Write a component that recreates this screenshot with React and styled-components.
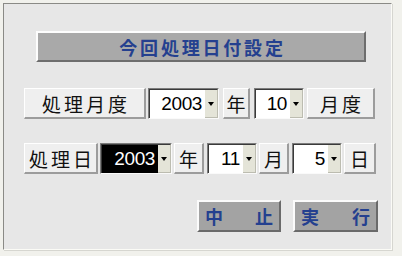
import React from "react";
import styled, { createGlobalStyle, css } from "styled-components";

const Global = createGlobalStyle`
  html, body { margin: 0; padding: 0; background: #f1f1ec; }
  body { width: 402px; height: 256px; overflow: hidden; }
`;

const CJK = `"Noto Sans CJK JP", "Noto Sans", sans-serif`;

const Frame = styled.div`
  box-sizing: border-box;
  margin: 3px 0 0 3px;
  width: 389px;
  height: 247px;
  background: #e7e7e7;
  border-top: 1px solid #8a8a86;
  border-left: 1px solid #8a8a86;
  border-right: 1px solid #fbfbf6;
  border-bottom: 1px solid #fbfbf6;
  box-shadow: 1px 1px 0 #d6d6d0;
  display: flex;
  flex-direction: column;
  padding: 27px 0 0 20px;
`;

const Title = styled.div`
  box-sizing: border-box;
  margin-left: 12px;
  width: 330px;
  height: 31px;
  background: #a9a9a9;
  border-top: 2px solid #fdfdfd;
  border-left: 2px solid #fdfdfd;
  border-right: 2px solid #6e6e6e;
  border-bottom: 2px solid #6e6e6e;
  display: flex;
  align-items: center;
  justify-content: center;
  font-family: ${CJK};
  font-weight: 700;
  font-size: 18px;
  letter-spacing: 2.8px;
  color: #24408f;
  padding-left: 3px;
`;

const Row = styled.div`
  display: flex;
  align-items: stretch;
  height: 31px;
  margin-top: ${(p) => p.$mt}px;
  justify-content: ${(p) => (p.$end ? "flex-end" : "flex-start")};
  padding-right: ${(p) => (p.$end ? 13 : 0)}px;
`;

const raised = css`
  box-sizing: border-box;
  border-top: 1px solid #ffffff;
  border-left: 1px solid #ffffff;
  border-right: 2px solid #9c9c9c;
  border-bottom: 2px solid #9c9c9c;
`;

const Label = styled.div`
  ${raised};
  width: ${(p) => p.$w}px;
  margin-left: ${(p) => p.$ml || 0}px;
  background: #efefef;
  display: flex;
  align-items: center;
  justify-content: center;
  font-family: ${CJK};
  font-size: 19px;
  letter-spacing: ${(p) => (p.$ls ?? 3)}px;
  padding-left: ${(p) => (p.$ls ?? 3)}px;
  color: #111;
`;

const Combo = styled.div`
  box-sizing: border-box;
  width: ${(p) => p.$w}px;
  margin-left: ${(p) => p.$ml || 0}px;
  display: flex;
  border-top: 1px solid #7c7c7c;
  border-left: 1px solid #7c7c7c;
  border-right: 1px solid #fafafa;
  border-bottom: 1px solid #fafafa;
  background: #ffffff;
`;

const Value = styled.div`
  flex: 1;
  display: flex;
  align-items: center;
  justify-content: flex-end;
  padding-right: 3px;
  font-family: "Liberation Sans", Arial, sans-serif;
  font-size: 19px;
  letter-spacing: -0.4px;
  background: ${(p) => (p.$sel ? "#000" : "#fff")};
  color: ${(p) => (p.$sel ? "#fff" : "#000")};
  border-top: 1px solid #3a3a3a;
  border-left: 1px solid #3a3a3a;
`;

const Arrow = styled.div`
  box-sizing: border-box;
  width: 13px;
  background: #e4e4d8;
  border-top: 1px solid #3a3a3a;
  border-right: 1px solid #bcbcb0;
  border-bottom: 1px solid #bcbcb0;
  display: flex;
  align-items: center;
  justify-content: center;
  &::before {
    content: "";
    width: 0;
    height: 0;
    border-left: 3px solid transparent;
    border-right: 3px solid transparent;
    border-top: 4px solid #000;
  }
`;

const Action = styled.div`
  box-sizing: border-box;
  width: ${(p) => p.$w}px;
  height: 32px;
  margin-left: ${(p) => p.$ml || 0}px;
  background: #a3a3a3;
  border-top: 2px solid #fbfbfb;
  border-left: 2px solid #fbfbfb;
  border-right: 2px solid #6a6a6a;
  border-bottom: 2px solid #6a6a6a;
  display: flex;
  align-items: center;
  justify-content: space-between;
  padding: 0 6px 0 6px;
  font-family: ${CJK};
  font-weight: 700;
  font-size: 18px;
  color: #24408f;
`;

const Sel = ({ w, ml, value, sel }) => (
  <Combo $w={w} $ml={ml}>
    <Value $sel={sel}>{value}</Value>
    <Arrow />
  </Combo>
);

export default function App() {
  return (
    <>
      <Global />
      <Frame>
        <Title>今回処理日付設定</Title>
        <Row $mt={26}>
          <Label $w={122}>処理月度</Label>
          <Sel w={71} ml={2} value="2003" />
          <Label $w={27} $ml={4} $ls={0}>年</Label>
          <Sel w={50} ml={4} value="10" />
          <Label $w={68} $ml={3}>月度</Label>
        </Row>
        <Row $mt={24}>
          <Label $w={74}>処理日</Label>
          <Sel w={72} ml={2} value="2003" sel />
          <Label $w={30} $ml={2} $ls={0}>年</Label>
          <Sel w={50} ml={3} value="11" />
          <Label $w={30} $ml={2} $ls={0}>月</Label>
          <Sel w={50} ml={3} value="5" />
          <Label $w={32} $ml={2} $ls={0}>日</Label>
        </Row>
        <Row $mt={26} $end>
          <Action $w={84}>
            <span>中</span>
            <span>止</span>
          </Action>
          <Action $w={85} $ml={12}>
            <span>実</span>
            <span>行</span>
          </Action>
        </Row>
      </Frame>
    </>
  );
}
